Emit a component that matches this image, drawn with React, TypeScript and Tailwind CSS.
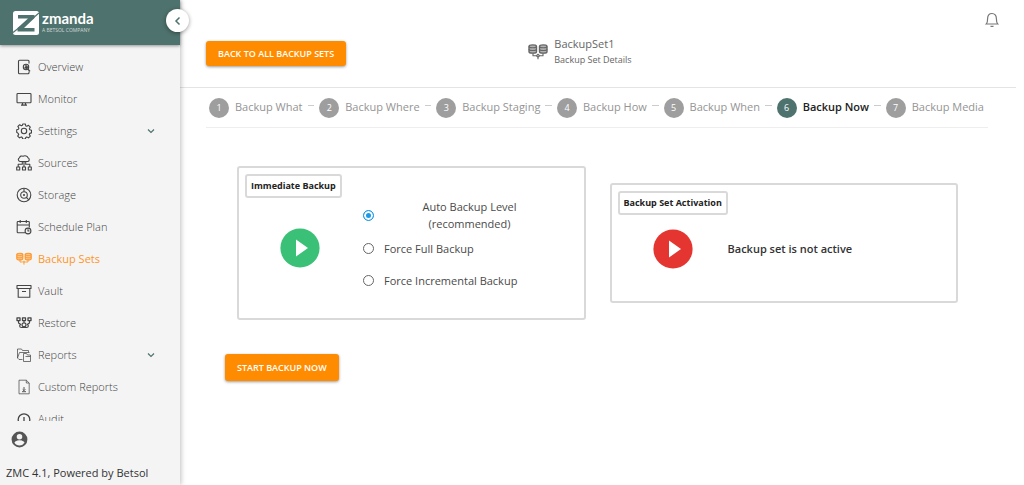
import { useState } from 'react';
import type { ReactNode } from 'react';

type IconName =
  | 'overview'
  | 'monitor'
  | 'settings'
  | 'sources'
  | 'storage'
  | 'schedule'
  | 'sets'
  | 'vault'
  | 'restore'
  | 'reports'
  | 'custom'
  | 'audit';

interface NavItem {
  label: string;
  icon: IconName;
  expandable?: boolean;
}

const navItems: NavItem[] = [
  { label: 'Overview', icon: 'overview' },
  { label: 'Monitor', icon: 'monitor' },
  { label: 'Settings', icon: 'settings', expandable: true },
  { label: 'Sources', icon: 'sources' },
  { label: 'Storage', icon: 'storage' },
  { label: 'Schedule Plan', icon: 'schedule' },
  { label: 'Backup Sets', icon: 'sets' },
  { label: 'Vault', icon: 'vault' },
  { label: 'Restore', icon: 'restore' },
  { label: 'Reports', icon: 'reports', expandable: true },
  { label: 'Custom Reports', icon: 'custom' },
  { label: 'Audit', icon: 'audit' },
];

const steps = [
  'Backup What',
  'Backup Where',
  'Backup Staging',
  'Backup How',
  'Backup When',
  'Backup Now',
  'Backup Media',
];

const levels = ['Auto Backup Level (recommended)', 'Force Full Backup', 'Force Incremental Backup'];

// All icons share a 16x16 grid
const iconShapes: Record<IconName, ReactNode> = {
  overview: (
    <>
      <path d="M13 4.500V2.300a1 1 0 0 0-1-1H3.500a1 1 0 0 0-1 1v11.400a1 1 0 0 0 1 1H12a1 1 0 0 0 1-1v-1.200" />
      <circle cx="10" cy="8" r="2.700" />
      <path d="M10 6v2h2M8.500 8.500l3 1M12 10.200l2 2.200" strokeWidth="1.400" />
    </>
  ),
  monitor: (
    <>
      <rect x="1" y="2.500" width="14" height="9.300" rx="0.800" />
      <path d="M6.500 12v2M9.500 12v2M5 14.200h6" strokeWidth="1.300" />
    </>
  ),
  settings: (
    <>
      <path d="M6.700 1h2.600l.5 1.900 1 .4 1.700-1 1.800 1.800-1 1.700.5 1 1.700.5v2.600l-1.800.5-.4 1 1 1.700-1.800 1.800-1.700-1-1 .5-.5 1.700H6.700l-.5-1.800-1-.4-1.700 1-1.800-1.800 1-1.700-.5-1L.7 9.300V6.700l1.700-.5.5-1-1-1.700 1.800-1.800 1.700 1 1-.4z" />
      <circle cx="8" cy="8" r="2.700" />
    </>
  ),
  sources: (
    <>
      <path d="M4 6.500a2 2 0 0 1-.5-3.800C4 1 5.500.7 7 1.200c2-1 4.500-.3 5 1.600a2 2 0 0 1 0 3.700z" />
      <path d="M8 6.500V12M6.300 6.500v2.700H2.200V12M9.700 6.500v2.700h4.100V12" />
      <path d="M.7 12h3v3h-3zM6.500 12h3v3h-3zM12.300 12h3v3h-3z" />
    </>
  ),
  storage: (
    <>
      <circle cx="8" cy="8" r="6.800" />
      <path d="M8 1.200v3.600M10.400 10.400l2.400 2.400" />
      <circle cx="8" cy="8" r="3.300" />
      <circle cx="8" cy="8" r="0.500" />
    </>
  ),
  schedule: (
    <>
      <path d="M9 13.700H2a.8.8 0 0 1-.8-.8V3.300c0-.5.3-.8.800-.8h10.500c.5 0 .8.3.8.800v5.200M1.200 6h12.100M4.200 1v3M10.300 1v3" />
      <circle cx="12" cy="12" r="2.900" />
      <path d="M12 10.300V12h1.500" />
    </>
  ),
  sets: (
    <>
      <path
        d="M.8 3.500v4.200c0 1.600 6 1.600 6 0V3.500c0-1.600-6-1.600-6 0zM9.200 3.500v4.200c0 1.600 6 1.600 6 0V3.500c0-1.600-6-1.600-6 0z"
        fill="currentColor"
        fillOpacity="0.500"
      />
      <path
        d="M.8 3.500c0 1.400 6 1.400 6 0M9.200 3.500c0 1.400 6 1.400 6 0M.8 5.700c0 1.400 6 1.400 6 0M9.200 5.700c0 1.400 6 1.400 6 0M4 9v2h2.600M12 9v2H9.400"
        strokeWidth="0.900"
      />
      <path d="M6.800 11 8 9.800 9.200 11 8 12.200zM8 12.200v1.500" strokeWidth="0.900" />
    </>
  ),
  vault: (
    <>
      <path d="M1 2.500h14v3H1zM2.200 5.500h11.600v8.700H2.200zM6 8.500h4" />
    </>
  ),
  restore: (
    <>
      <path d="M1 2.800h3v2.800H1zM6.500 2.800h3v2.800h-3zM12 2.800h3v2.800h-3z" strokeWidth="1.300" />
      <path
        d="M2.500 5.800v1.700c0 1 .8 1.300 2 1.300M13.500 5.800v1.700c0 1-.8 1.300-2 1.300M8 5.800v1.700M5.500 12.500C3 12.300 3.300 9.500 5 9.300M10.500 12.500c2.500-.2 2.200-3 .5-3.200M5.500 12.500h5"
        strokeWidth="1.200"
      />
      <circle cx="8" cy="9.800" r="2" strokeWidth="1.200" />
    </>
  ),
  reports: (
    <>
      <path
        d="M6.500 12.500H3L1.500 11V2h4l1 1.500h6v2M1.500 11l2-5.500h10M7.500 6.500h3l1 1.500h3v6.500h-7zM9.500 9.500h5"
        strokeWidth="0.900"
        strokeOpacity="0.800"
      />
    </>
  ),
  custom: (
    <>
      <path d="M3 1.200h7.300L13.200 4v10.800H3zM10.300 1.200V4h2.900" strokeWidth="0.900" strokeOpacity="0.800" />
      <path d="M8 8v3.500M6.700 10.400 8 11.700l1.300-1.300M6 12.700h4" strokeWidth="0.900" />
    </>
  ),
  audit: (
    <>
      <path d="M4 12.800a5.800 5.800 0 1 1 8 0M8 6v5" strokeWidth="1.300" />
    </>
  ),
};

const Icon = ({ name, className }: { name: IconName; className?: string }) => (
  <svg
    viewBox="0 0 16 16"
    className={className}
    fill="none"
    stroke="currentColor"
    strokeWidth="1.100"
    strokeLinejoin="round"
    aria-hidden="true"
  >
    {iconShapes[name]}
  </svg>
);

const Logo = () => (
  <div className="flex items-center gap-[3px] text-white">
    <svg viewBox="0 0 26 24" className="h-6 w-[26px]" aria-hidden="true">
      <rect width="26" height="24" rx="2.500" fill="#fff" />
      <path d="M5 4h16.500v3L11 17h10.500v3.500H4.500V17L15 7.500H5z" fill="#4e726d" />
      <path d="M0 21.500 7 16M19 8l7-6" stroke="#4e726d" strokeWidth="1.200" />
    </svg>
    <div className="flex flex-col pb-1">
      <span className="font-['Lato',sans-serif] text-[15px] leading-[18px] font-bold">zmanda</span>
      <span className="text-[5px] leading-[6px] opacity-70">A BETSOL COMPANY</span>
    </div>
  </div>
);

const PlayBadge = ({ color }: { color: string }) => (
  <svg viewBox="0 0 40 40" className="size-10 shrink-0" aria-hidden="true">
    <circle cx="20" cy="20" r="19.600" fill={color} />
    <path d="M16 11.500v17L28 20z" fill="#fff" />
  </svg>
);

const Sidebar = () => (
  <aside className="relative z-10 flex w-[180px] shrink-0 flex-col bg-[#f4f4f4] shadow-[1px_0_5px_rgba(0,0,0,0.25)]">
    <div className="flex h-[45px] shrink-0 items-center bg-[#4e726d] pl-[13px] shadow-[0_1px_3px_rgba(0,0,0,0.4)]">
      <Logo />
    </div>
    <button
      aria-label="Collapse menu"
      className="absolute top-[9px] -right-[9px] flex size-[23px] items-center justify-center rounded-full bg-white text-[#4e726d] shadow-[0_1px_4px_rgba(0,0,0,0.4)]"
    >
      <svg viewBox="0 0 10 10" className="size-[10px]" fill="none" stroke="currentColor" strokeWidth="1.500">
        <path d="M6.500 1.500 3 5l3.500 3.500" />
      </svg>
    </button>
    <nav className="min-h-0 flex-1 overflow-hidden pt-[6px]">
      <ul>
        {navItems.map((item) => (
          <li key={item.label}>
            <a
              href="#"
              className={`flex h-8 items-center pr-6 pl-4 text-[11px] ${
                item.icon === 'sets' ? 'text-[#ff9527]' : 'font-light text-[#444]'
              }`}
            >
              <Icon name={item.icon} className="mr-[6px] size-4" />
              <span className="flex-1">{item.label}</span>
              {item.expandable && (
                <svg viewBox="0 0 10 10" className="size-[10px] text-[#4e726d]" fill="none" stroke="currentColor" strokeWidth="1.200">
                  <path d="M2 3.500l3 3 3-3" />
                </svg>
              )}
            </a>
          </li>
        ))}
      </ul>
    </nav>
    <div className="shrink-0 px-[6px] pt-[9px] pb-1">
      <button aria-label="Account" className="ml-1 block text-[#555]">
        <svg viewBox="0 0 24 24" className="size-[19px]" fill="currentColor">
          <path d="M12 2a10 10 0 1 0 0 20 10 10 0 0 0 0-20zm0 3a3.500 3.500 0 1 1 0 7 3.500 3.500 0 0 1 0-7zm0 14.500c-2.700 0-5-1.400-6.300-3.500.1-2 4.200-3.100 6.300-3.100s6.200 1.100 6.300 3.100a7.500 7.500 0 0 1-6.300 3.500z" />
        </svg>
      </button>
      <p className="mt-4 text-[11px] leading-4 text-[#333]">ZMC 4.1, Powered by Betsol</p>
    </div>
  </aside>
);

const Stepper = ({ current }: { current: number }) => (
  <ol className="mr-9 ml-[26px] flex h-10 items-center border-b border-[#eee] pr-1 pl-[3px]">
    {steps.map((step, index) => (
      <li key={step} className={`flex items-center whitespace-nowrap ${index > 0 ? 'flex-auto' : ''}`}>
        {index > 0 && <span className="mx-[5px] mb-1 h-px flex-1 bg-[#ccc]" />}
        <span
          className={`flex size-5 items-center justify-center rounded-full text-[9px] text-white ${
            index === current ? 'bg-[#4e726d]' : 'bg-[#9e9e9e]'
          }`}
        >
          {index + 1}
        </span>
        <span className={`ml-[6px] text-[11px] ${index === current ? 'font-semibold text-[#222]' : 'text-[#949494]'}`}>
          {step}
        </span>
      </li>
    ))}
  </ol>
);

const App = () => {
  const [level, setLevel] = useState(levels[0]);

  return (
    <div className="flex h-screen bg-white font-['Open_Sans',sans-serif] text-[#333]">
      <Sidebar />
      <main className="min-w-0 flex-1">
        <header className="mr-2 flex h-[88px] items-start border-b border-[#e4e4e4] pl-[26px]">
          <div className="flex-[7] pt-[41px]">
            <button className="block h-[25px] rounded-[3px] bg-[#ff8c00] px-3 text-[9px] font-semibold text-white shadow-[0_1px_3px_rgba(0,0,0,0.4)]">
              BACK TO ALL BACKUP SETS
            </button>
          </div>
          <div className="flex items-center gap-[6px] pt-9 text-[#666]">
            <Icon name="sets" className="size-5" />
            <div>
              <h1 className="text-[11px] leading-4">BackupSet1</h1>
              <p className="text-[9px] leading-4">Backup Set Details</p>
            </div>
          </div>
          <div className="flex flex-[8] justify-end pt-3 pr-4">
            <button aria-label="Notifications" className="text-[#777]">
              <svg viewBox="0 0 16 16" className="size-4" fill="none" stroke="currentColor" strokeWidth="1.200">
                <path d="M2.300 12h11.400c-1.200-1.200-1.300-2.700-1.300-5.200C12.400 3.700 10.700 1.500 8 1.500S3.600 3.700 3.600 6.800c0 2.500-.1 4-1.300 5.200zM6.500 14.300h3" />
              </svg>
            </button>
          </div>
        </header>

        <Stepper current={5} />

        <div className="mt-[38px] flex items-center gap-6 pr-[66px] pl-[57px]">
          <section className="h-[154px] flex-1 rounded-[3px] border-2 border-[#d9d9d9] p-[6px]">
            <h2 className="flex h-6 w-fit items-center rounded-[3px] border-2 border-[#d9d9d9] px-1 text-[9px] font-bold text-[#222]">
              Immediate Backup
            </h2>
            <div className="flex items-start pl-[35px]">
              <div className="pt-[30px]">
                <PlayBadge color="#3ac177" />
              </div>
              <fieldset className="ml-[43px] text-[11px] text-[#4a4a4a]">
                {levels.map((item, index) => (
                  <label key={item} className={`flex items-center ${index === 0 ? 'h-[34px]' : 'h-8'}`}>
                    <input
                      type="radio"
                      name="level"
                      checked={level === item}
                      onChange={() => setLevel(item)}
                      className="size-[11px] shrink-0 appearance-none rounded-full border border-[#666] checked:border-[#1a9ae8] checked:bg-[#1a9ae8] checked:shadow-[inset_0_0_0_2px_white]"
                    />
                    <span className={`ml-[10px] leading-[17px] ${index === 0 ? 'w-[171px] px-8 text-center' : ''}`}>
                      {item}
                    </span>
                  </label>
                ))}
              </fieldset>
            </div>
          </section>

          <section className="h-[120px] flex-1 rounded-[3px] border-2 border-[#d9d9d9] p-[6px]">
            <h2 className="flex h-6 w-fit items-center rounded-[3px] border-2 border-[#d9d9d9] px-1 text-[9px] font-bold text-[#222]">
              Backup Set Activation
            </h2>
            <div className="flex items-center gap-[35px] pt-[14px] pl-[35px]">
              <PlayBadge color="#e43530" />
              <p className="text-[11px] font-semibold">Backup set is not active</p>
            </div>
          </section>
        </div>

        <button className="mt-[34px] ml-[45px] block h-[27px] rounded-[3px] bg-[#ff8c00] px-3 text-[9px] font-semibold text-white shadow-[0_1px_3px_rgba(0,0,0,0.4)]">
          START BACKUP NOW
        </button>
      </main>
    </div>
  );
};

export default App;
